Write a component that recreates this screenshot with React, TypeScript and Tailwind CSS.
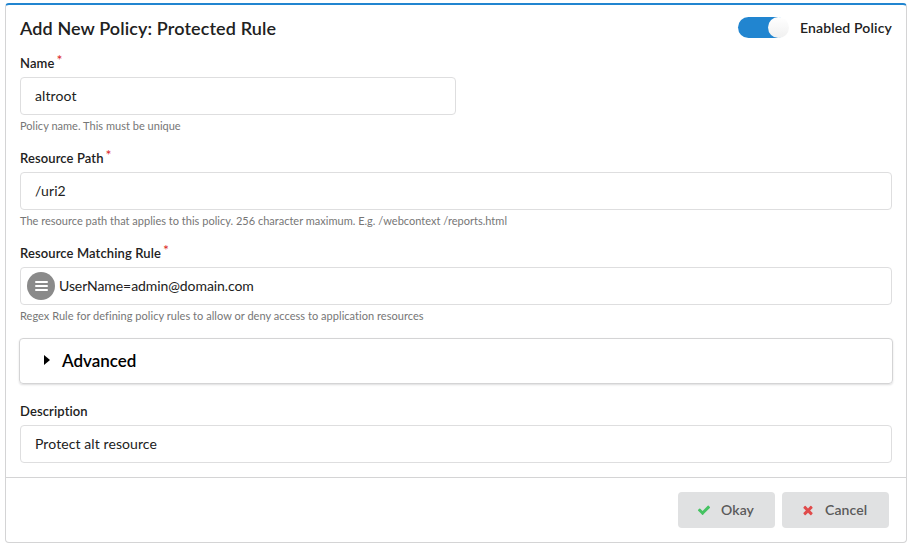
import React from "react";

function Field({ label, required, hint, value, icon, narrow, hintClass = "" }: { label: string; required?: boolean; hint?: string; value: string; icon?: boolean; narrow?: boolean; hintClass?: string }) {
  return (
    <div className={hint ? "h-[95px]" : ""}>
      <label className="block h-[23px] text-[13px] leading-[18px] font-semibold tracking-[0.11px] text-[#212121]">
        {label}
        {required && <span className="relative -top-[3px] ml-[2px] text-[14px] leading-none font-normal text-[#db2828]">*</span>}
      </label>
      <div className={`${narrow ? "w-[436px]" : "w-full"} flex h-[38px] items-center rounded border border-[#dededf] pb-[2px] text-[14px] text-[#212121] ${icon ? "pl-[6px] tracking-[-0.08px]" : "pl-[14px] tracking-[0.09px]"}`}>
        {icon && (
          <span className="relative top-px mr-[4px] flex size-[28px] shrink-0 flex-col items-center justify-center gap-[2px] rounded-full bg-[#8a8a8a]">
            <i className="h-[2px] w-[13px] rounded-[1px] bg-white" />
            <i className="h-[2px] w-[13px] rounded-[1px] bg-white" />
            <i className="h-[2px] w-[13px] rounded-[1px] bg-white" />
          </span>
        )}
        {value}
      </div>
      {hint && <p className={`pt-[3px] text-[11px] leading-[16px] text-[#767676] ${hintClass}`}>{hint}</p>}
    </div>
  );
}

export default function App() {
  return (
    <div className="h-[546px] w-[910px] bg-white pt-[3px] pl-[5px] font-[Lato,sans-serif]">
      <div className="h-[540px] w-[902px] rounded border border-t-2 border-[#d4d4d5] border-t-[#2185d0]">
        <div className="h-[472px] px-[14px]">
          <header className="flex h-[49px] items-start justify-between">
            <h1 className="pt-[10px] text-[18px] leading-[27px] font-semibold tracking-[0.11px] text-[#212121]">Add New Policy: Protected Rule</h1>
            <div className="flex items-start gap-[13px] pt-[12px] text-[14px] leading-[21px] font-semibold tracking-[0.15px] text-[#212121]">
              <span className="flex h-[21px] w-[49px] justify-end rounded-full bg-[#2185d0]">
                <span className="relative -right-[2px] size-[21px] rounded-full bg-linear-to-b from-white to-[#f0f0f0]" />
              </span>
              Enabled Policy
            </div>
          </header>
          <Field label="Name" required value="altroot" hint="Policy name. This must be unique" narrow hintClass="tracking-[0.02px]" />
          <Field label="Resource Path" required value="/uri2" hint="The resource path that applies to this policy. 256 character maximum. E.g. /webcontext /reports.html" hintClass="tracking-[0.01px]" />
          <Field label="Resource Matching Rule" required value="UserName=admin@domain.com" hint="Regex Rule for defining policy rules to allow or deny access to application resources" icon hintClass="tracking-[0.04px]" />
          <div className="-mx-px -mt-px mb-[18px] flex h-[46px] items-center rounded border border-[#d4d4d5] pl-[24px] text-[17px] font-semibold text-black shadow-[0_1px_2px_rgba(34,36,38,0.15)]">
            <svg width="6" height="10" viewBox="0 0 6 10" className="relative -top-px mr-[12px]"><path d="M0 0 6 5 0 10z" /></svg>
            Advanced
          </div>
          <Field label="Description" value="Protect alt resource" />
        </div>
        <footer className="flex justify-end gap-[7px] border-t border-[#d4d4d5] pt-[14px] pr-[17px] text-[14px] font-semibold tracking-[0.1px] text-[#5a5a5a]">
          <button className="flex h-[36px] w-[97px] items-center gap-[10px] rounded bg-[#e0e1e2] pb-px pl-[19px]">
            <svg width="14" height="14" viewBox="0 0 1792 1792" fill="#45c362"><path d="M1671 566q0 40-28 68l-724 724-136 136q-28 28-68 28t-68-28l-136-136-362-362q-28-28-28-68t28-68l136-136q28-28 68-28t68 28l294 295 656-657q28-28 68-28t68 28l136 136q28 28 28 68z" /></svg>
            Okay
          </button>
          <button className="flex h-[36px] w-[107px] items-center gap-[10px] rounded bg-[#e0e1e2] pb-px pl-[19px]">
            <svg width="14" height="14" viewBox="0 0 1792 1792" fill="#e04b4b"><path d="M1490 1322q0 40-28 68l-136 136q-28 28-68 28t-68-28l-294-294-294 294q-28 28-68 28t-68-28l-136-136q-28-28-28-68t28-68l294-294-294-294q-28-28-28-68t28-68l136-136q28-28 68-28t68 28l294 294 294-294q28-28 68-28t68 28l136 136q28 28 28 68t-28 68l-294 294 294 294q28 28 28 68z" /></svg>
            Cancel
          </button>
        </footer>
      </div>
    </div>
  );
}
